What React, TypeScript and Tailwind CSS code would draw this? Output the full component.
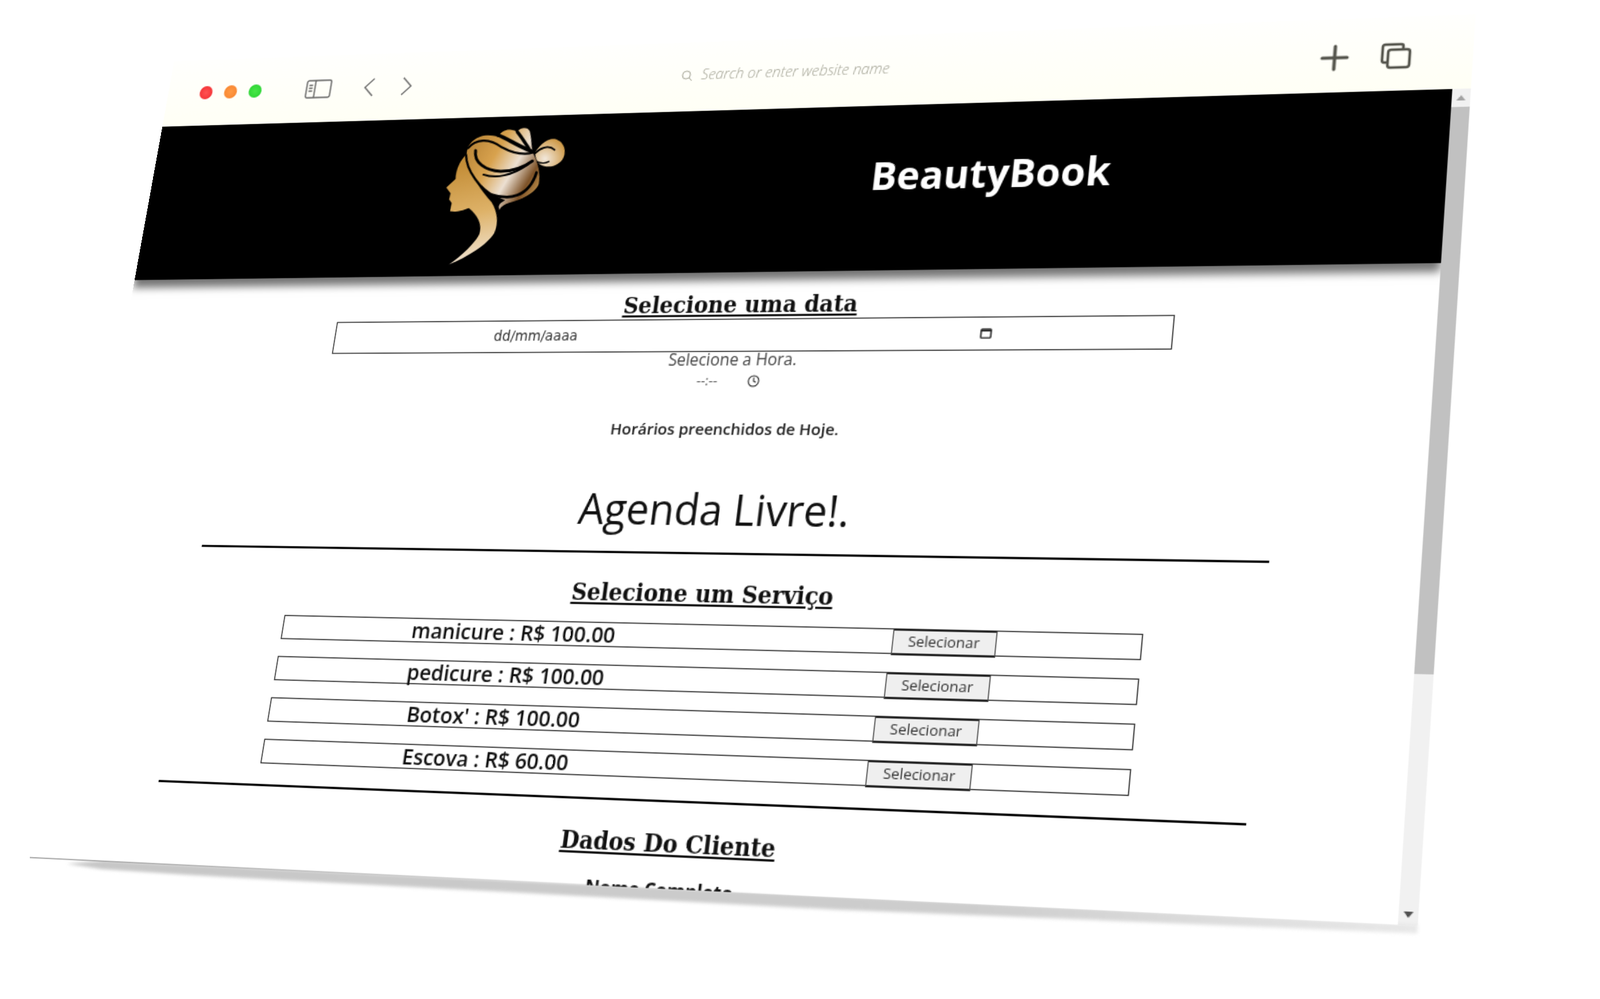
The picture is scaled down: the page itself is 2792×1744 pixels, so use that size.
import { Clock } from 'lucide-react';

const WIDTH = 1280;
const HEIGHT = 800;

// corners of the tilted window in the screenshot: TL, TR, BR, BL
const CORNERS = [
  [304, 107],
  [2575, 25],
  [2474, 1616],
  [52, 1498],
];

function tiltMatrix() {
  const [[x0, y0], [x1, y1], [x2, y2], [x3, y3]] = CORNERS;
  const dx1 = x1 - x2;
  const dx2 = x3 - x2;
  const sx = x0 - x1 + x2 - x3;
  const dy1 = y1 - y2;
  const dy2 = y3 - y2;
  const sy = y0 - y1 + y2 - y3;
  const den = dx1 * dy2 - dx2 * dy1;
  const g = (sx * dy2 - dx2 * sy) / den;
  const h = (dx1 * sy - sx * dy1) / den;
  const a = x1 - x0 + g * x1;
  const b = x3 - x0 + h * x3;
  const d = y1 - y0 + g * y1;
  const e = y3 - y0 + h * y3;
  const m = [a / WIDTH, d / WIDTH, 0, g / WIDTH, b / HEIGHT, e / HEIGHT, 0, h / HEIGHT, 0, 0, 1, 0, x0, y0, 0, 1];
  return `matrix3d(${m.join(',')})`;
}

const services = [
  { name: 'manicure', price: '100.00' },
  { name: 'pedicure', price: '100.00' },
  { name: "Botox'", price: '100.00' },
  { name: 'Escova', price: '60.00' },
];

function Logo() {
  return (
    <svg viewBox="225 90 612 730" preserveAspectRatio="none" className="w-[122px] h-[143px] shrink-0">
      <defs>
        <linearGradient id="gold" gradientUnits="userSpaceOnUse" x1="300" y1="180" x2="720" y2="440">
          <stop offset="0" stopColor="#b07c30" />
          <stop offset="0.4" stopColor="#d8a24e" />
          <stop offset="0.64" stopColor="#ece0d2" />
          <stop offset="0.84" stopColor="#7d5228" />
          <stop offset="1" stopColor="#c8984e" />
        </linearGradient>
        <radialGradient id="bun" gradientUnits="userSpaceOnUse" cx="750" cy="270" r="110">
          <stop offset="0" stopColor="#f2e8dc" />
          <stop offset="1" stopColor="#cf9c4c" />
        </radialGradient>
        <linearGradient id="skin" gradientUnits="userSpaceOnUse" x1="300" y1="300" x2="400" y2="800">
          <stop offset="0" stopColor="#c48e38" />
          <stop offset="0.5" stopColor="#deb268" />
          <stop offset="1" stopColor="#f1e5d5" />
        </linearGradient>
      </defs>
      <g transform="translate(-69,0) skewX(9.6)">
        {/* face and neck */}
        <path
          fill="url(#skin)"
          d="M345 235 C310 270 288 310 285 365 L236 408 L258 438 L250 470 L263 490 L254 532 C290 540 330 525 352 518 C395 555 420 600 405 650 C385 695 310 765 245 806 C340 770 440 710 480 650 C505 600 500 540 470 490 C420 430 360 350 345 235 Z"
        />
        {/* hair mass */}
        <path
          fill="url(#gold)"
          d="M350 205 C375 150 440 125 510 150 C530 110 570 105 610 125 C630 100 665 100 675 125 C685 170 680 210 690 240 C715 290 725 350 715 400 C695 450 620 480 560 495 C540 500 520 510 510 530 L506 515 C510 495 525 490 540 480 C470 450 400 400 360 310 C345 280 340 240 350 205 Z"
        />
        {/* bun */}
        <path
          fill="url(#bun)"
          d="M700 235 C730 190 770 160 810 170 C850 185 865 235 840 275 C810 315 750 325 715 290 C705 275 700 255 700 235 Z"
        />
        {/* black strands */}
        <g fill="none" stroke="#000" strokeLinecap="round">
          <path strokeWidth="11" d="M352 205 C400 150 470 160 530 205 C590 240 640 250 692 235" />
          <path strokeWidth="20" d="M510 140 C560 160 610 200 680 228" />
          <path strokeWidth="17" d="M610 125 C630 150 650 185 668 215" />
          <path strokeWidth="15" d="M392 218 C380 280 440 325 520 330 C580 330 640 312 685 280" />
          <path strokeWidth="10" d="M430 345 C490 368 580 355 665 295" />
          <path strokeWidth="12" d="M342 240 C340 320 410 420 505 480" />
          <path strokeWidth="14" d="M470 450 C560 480 660 470 705 340" />
          <path strokeWidth="9" d="M700 240 C725 215 770 195 800 225" />
          <path strokeWidth="7" d="M710 285 C730 295 750 295 770 285" />
        </g>
      </g>
    </svg>
  );
}

function SidebarIcon() {
  return (
    <svg viewBox="0 0 28 20" className="w-[28px] h-[20px] ml-[48px] shrink-0" fill="none" stroke="#666" strokeWidth="1.4">
      <rect x="1" y="1" width="26" height="18" rx="2" />
      <path d="M10 1 V19" />
      <path d="M3.5 6 H7.5 M3.5 9 H7.5 M3.5 12 H7.5" strokeWidth="1.6" />
    </svg>
  );
}

function Chevron({ back, className }: { back?: boolean; className: string }) {
  return (
    <svg viewBox="0 0 12 20" className={className} fill="none" stroke="#666" strokeWidth="1.4">
      <path d={back ? 'M11 1 L2 10 L11 19' : 'M1 1 L10 10 L1 19'} />
    </svg>
  );
}

function SelectRow({ name, price }: { name: string; price: string }) {
  return (
    <div className="w-[812px] h-[23px] pl-[4px] border border-[#333] flex items-center justify-around">
      <span className="pr-[5px] text-[20px] leading-[22px] font-semibold text-[#111]">
        {name} : R$ {price}
      </span>
      <button className="w-[94px] h-[24px] bg-[#efefef] border-x border-y-2 border-x-[#555] border-y-[#222] text-[13.33px] text-[#333] shrink-0">Selecionar</button>
    </div>
  );
}

export default function App() {
  return (
    <div className="relative w-[2792px] h-[1744px] overflow-hidden bg-white">
      <div
        className="absolute left-0 top-0 w-[1280px] h-[800px] origin-top-left flex flex-col font-['Open_Sans',sans-serif]"
        style={{ transform: tiltMatrix() }}
      >
        {/* soft shadow under the window */}
        <div className="absolute left-[40px] right-0 top-full h-[13px] -mt-[1px] blur-[1.5px]">
          <div className="w-full h-full bg-linear-to-r from-[#c6c6c6] via-[#cdcdcd] via-70% to-[#e8e8e8] [clip-path:polygon(0_35%,3%_0,100%_0,100%_55%,60%_88%,10%_72%,3%_62%)]" />
        </div>

        {/* browser toolbar */}
        <div className="h-[70px] shrink-0 flex items-center pl-[35px] pr-[53px] bg-linear-to-b from-[#fffffd] to-[#fffff5]">
          <div className="flex gap-[13px] shrink-0">
            <div className="w-[14px] h-[14px] rounded-full bg-radial from-[#ff5252] to-[#f0202a]" />
            <div className="w-[14px] h-[14px] rounded-full bg-radial from-[#ff9a45] to-[#f6812a]" />
            <div className="w-[14px] h-[14px] rounded-full bg-radial from-[#47e747] to-[#22cf2e]" />
          </div>
          <SidebarIcon />
          <Chevron back className="w-[12px] h-[20px] ml-[34px] shrink-0" />
          <Chevron className="w-[12px] h-[20px] ml-[29px] shrink-0" />
          <svg viewBox="0 0 12 12" className="w-[12px] h-[12px] ml-[277px] -mt-[3px] shrink-0" fill="none" stroke="#a9a99c" strokeWidth="1">
            <circle cx="5" cy="5" r="4" />
            <path d="M8 8 L11 11" />
          </svg>
          <span className="ml-[8px] -mt-[5px] text-[14.4px] italic font-light text-[#a3a395] whitespace-nowrap">
            Search or enter website name
          </span>
          <div className="ml-auto flex items-center gap-[27px] mt-[4px]">
            <svg viewBox="0 0 26 26" className="w-[26px] h-[26px]" stroke="#55554d" strokeWidth="3" strokeLinecap="round">
              <path d="M13 2 V24 M2 13 H24" />
            </svg>
            <svg viewBox="0 0 28 26" className="w-[28px] h-[26px]" fill="none" stroke="#55554d" strokeWidth="2.4">
              <path d="M6 19 H4 Q2 19 2 17 V4 Q2 2 4 2 H18 Q20 2 20 4 V6" />
              <rect x="7" y="7" width="19" height="17" rx="2.5" />
            </svg>
          </div>
        </div>

        <div className="flex-1 min-h-0 flex">
          {/* page */}
          <div className="relative flex-1 min-w-0 overflow-hidden bg-white flex flex-col text-[#111]">
            <header className="relative z-10 w-full h-[161px] shrink-0 bg-black shadow-[0_8px_8px_rgba(0,0,0,0.55)] flex items-center pl-[316px] gap-[304px]">
              <Logo />
              <h1 className="text-[37px] leading-[44px] font-bold text-white mb-[24px]">BeautyBook</h1>
            </header>

            <div className="flex flex-col items-center pr-[4px]">
              <h2 className="mt-[17px] h-[28px] leading-[28px] text-[23px] font-bold underline font-['DejaVu_Serif_Condensed','DejaVu_Serif',serif] [font-stretch:condensed]">Selecione uma data</h2>
              <div className="w-[810px] h-[32px] ml-[2px] shrink-0 border border-[#333] flex items-center justify-center">
                <div className="w-[481px] flex items-center justify-between">
                  <span className="text-[13.33px] text-[#333] font-['DejaVu_Sans',sans-serif]">dd/mm/aaaa</span>
                  <svg viewBox="0 0 12 12" className="w-[11px] h-[11px]" fill="none" stroke="#222" strokeWidth="1.5">
                    <rect x="1" y="2" width="10" height="9" rx="1" />
                    <path d="M1 3.5 H11" strokeWidth="2" />
                  </svg>
                </div>
              </div>
              <p className="text-[15.4px] leading-[16px] text-[#444]">Selecione a Hora.</p>
              <div className="mt-[2px] w-[78px] h-[20px] pr-[10px] flex items-center justify-between text-[13px] text-[#555]">
                <span className="ml-[7px]">--:--</span>
                <Clock className="w-[12px] h-[12px] text-[#222]" strokeWidth={2} />
              </div>

              <p className="mt-[23px] h-[24px] leading-[24px] text-[15px] font-semibold text-[#222]">Horários preenchidos de Hoje.</p>
              <p className="mt-[40px] mr-[1px] h-[48px] leading-[48px] text-[39.5px] text-[#111]">Agenda Livre!.</p>
              <hr className="mt-[16px] mr-[2px] w-[1013px] h-[2px] shrink-0 bg-black border-0" />

              <h2 className="mt-[22px] mr-[3px] h-[28px] leading-[28px] text-[23px] font-bold underline font-['DejaVu_Serif_Condensed','DejaVu_Serif',serif] [font-stretch:condensed]">Selecione um Serviço</h2>
              <div className="mt-[14px] mr-[7px] flex flex-col gap-[16px]">
                {services.map((s) => (
                  <SelectRow key={s.name} name={s.name} price={s.price} />
                ))}
              </div>
              <hr className="mt-[19px] mr-[7px] w-[1014px] h-[2px] shrink-0 bg-black border-0" />

              <h2 className="mt-[22px] mr-[7px] h-[28px] leading-[28px] text-[23px] font-bold underline font-['DejaVu_Serif_Condensed','DejaVu_Serif',serif] [font-stretch:condensed]">Dados Do Cliente</h2>
              <p className="mt-[16px] mr-[12px] text-[17px] leading-[24px] font-bold">Nome Completo</p>
            </div>

            {/* thin edge line along the bottom left */}
            <div className="absolute left-0 bottom-0 w-[60%] h-px bg-linear-to-r from-[#999] to-transparent" />
          </div>

          {/* scrollbar */}
          <div className="w-[16px] shrink-0 bg-[#f1f1f1] flex flex-col items-center">
            <div className="h-[17px] shrink-0 flex items-center justify-center">
              <div className="w-0 h-0 border-x-[4px] border-x-transparent border-b-[5px] border-b-[#a3a3a3]" />
            </div>
            <div className="w-full h-[505px] shrink-0 bg-[#c1c1c1]" />
            <div className="mt-auto h-[17px] shrink-0 flex items-center justify-center">
              <div className="w-0 h-0 border-x-[4px] border-x-transparent border-t-[5px] border-t-[#505050]" />
            </div>
          </div>
        </div>
      </div>
    </div>
  );
}
